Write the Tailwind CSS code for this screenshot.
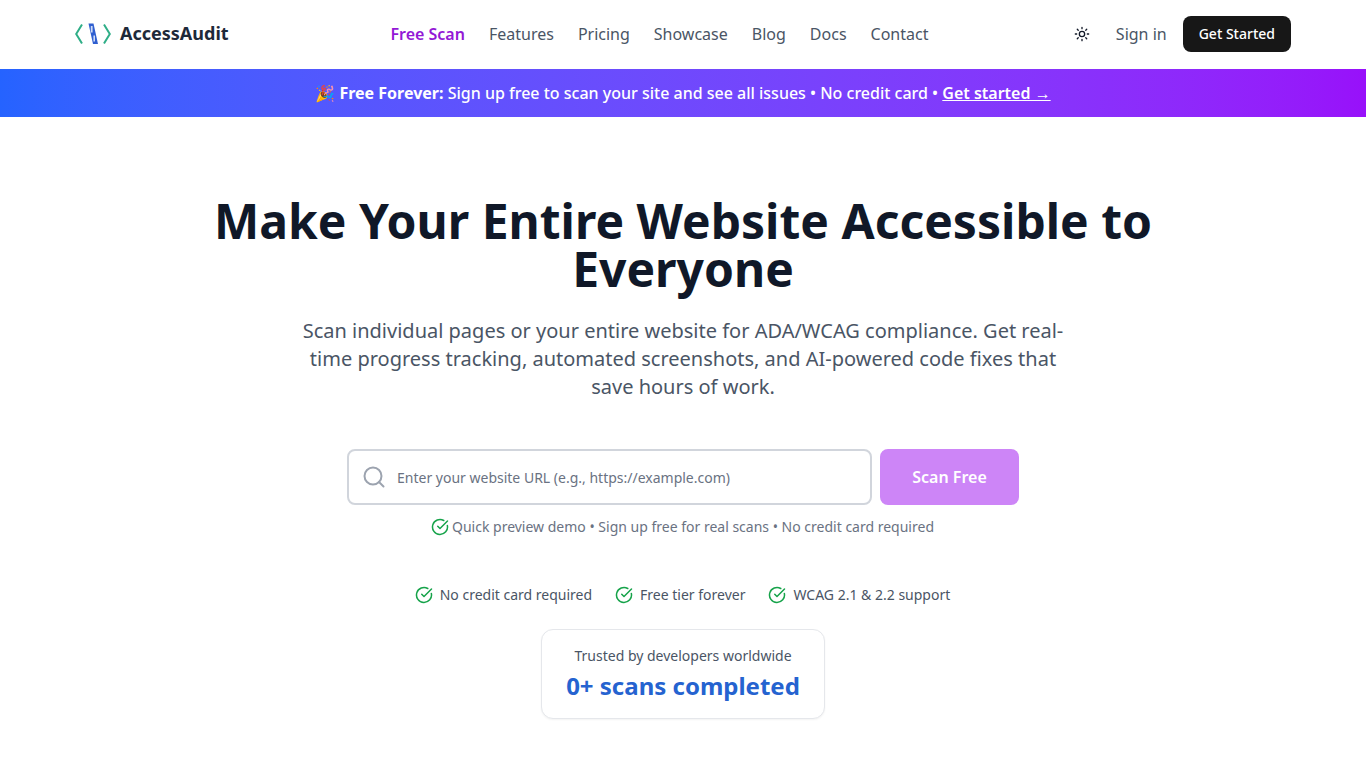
<!DOCTYPE html>
<html lang="en">
<head>
  <meta charset="UTF-8">
  <meta name="viewport" content="width=device-width, initial-scale=1.0">
  <title>AccessAudit</title>
  <script src="https://cdn.jsdelivr.net/npm/@tailwindcss/browser@4"></script>
</head>
<body class="bg-white min-h-screen font-['Noto_Sans','Noto_Color_Emoji',sans-serif] overflow-hidden">
  <!-- header -->
  <header class="h-[69px] bg-white">
    <div class="max-w-7xl mx-auto px-8 h-[68px] flex items-center justify-between">
      <a href="#" class="flex items-center gap-[9px] w-[170px]">
        <svg width="36" height="24" viewBox="0 0 36 24" fill="none">
          <path d="M7 2.5 L1.2 12 L7 21.5" stroke="#2fae87" stroke-width="2"/>
          <path d="M29 2.5 L34.8 12 L29 21.5" stroke="#2fae87" stroke-width="2"/>
          <path d="M13.5 1.5 H18.5 L23 22 H18 Z" fill="#2f5fd0"/>
          <path d="M15.8 4 H17.6 V10.5 H15.8 Z M18.4 13.5 H20 V19.5 H18.4 Z" fill="#cfdcf7"/>
        </svg>
        <span class="-mt-0.5 text-lg font-bold text-gray-800">AccessAudit</span>
      </a>
      <nav class="flex items-center gap-6 text-base text-gray-600">
        <a href="#" class="font-semibold text-[#9318d6]">Free Scan</a>
        <a href="#">Features</a>
        <a href="#">Pricing</a>
        <a href="#">Showcase</a>
        <a href="#">Blog</a>
        <a href="#">Docs</a>
        <a href="#">Contact</a>
      </nav>
      <div class="flex items-center">
        <svg class="mr-[26px]" width="16" height="16" viewBox="0 0 24 24" fill="none" stroke="#111827" stroke-width="2" stroke-linecap="round">
          <circle cx="12" cy="12" r="4"/>
          <path d="M12 2v2M12 20v2M4.93 4.93l1.41 1.41M17.66 17.66l1.41 1.41M2 12h2M20 12h2M6.34 17.66l-1.41 1.41M19.07 4.93l-1.41 1.41"/>
        </svg>
        <a href="#" class="text-base text-gray-600 mr-4">Sign in</a>
        <a href="#" class="h-9 px-4 flex items-center rounded-lg bg-[#171717] text-white text-sm font-medium">Get Started</a>
      </div>
    </div>
  </header>

  <!-- banner -->
  <div class="h-12 flex items-center justify-center bg-gradient-to-r from-[#2563ff] to-[#9810fa] text-white text-base font-medium">
    <p>🎉 <strong class="font-bold">Free Forever:</strong> Sign up free to scan your site and see all issues • No credit card • <a href="#" class="font-semibold underline">Get started →</a></p>
  </div>

  <!-- hero -->
  <main class="flex flex-col items-center pt-20 px-4">
    <h1 class="max-w-[1000px] text-center text-5xl leading-[48px] font-bold text-gray-900">Make Your Entire Website Accessible to Everyone</h1>
    <p class="mt-6 max-w-3xl text-center text-xl leading-7 text-gray-600">Scan individual pages or your entire website for ADA/WCAG compliance. Get real-time progress tracking, automated screenshots, and AI-powered code fixes that save hours of work.</p>

    <form class="mt-12 w-[672px] flex gap-2">
      <div class="relative flex-1">
        <svg class="absolute left-[15px] top-4" width="24" height="24" viewBox="0 0 24 24" fill="none" stroke="#9ca3af" stroke-width="2" stroke-linecap="round">
          <circle cx="11" cy="11" r="8.5"/>
          <path d="M21.5 21.5l-4.5-4.5"/>
        </svg>
        <input type="text" placeholder="Enter your website URL (e.g., https://example.com)" class="w-full h-14 pl-12 pr-4 rounded-lg border-2 border-gray-300 bg-white text-sm placeholder:text-gray-500">
      </div>
      <button type="button" class="w-[139px] h-14 rounded-lg bg-[#cd85f7] text-white font-semibold text-base">Scan Free</button>
    </form>

    <p class="mt-3 flex items-center gap-1 text-sm text-gray-500">
      <svg class="-m-px" width="18" height="18" viewBox="0 0 24 24" fill="none" stroke="#16a34a" stroke-width="2" stroke-linecap="round" stroke-linejoin="round"><path d="M21.8 10A10 10 0 1 1 17 3.34"/><path d="M9 11l3 3L22 4"/></svg>
      Quick preview demo • Sign up free for real scans • No credit card required
    </p>

    <ul class="mt-12 flex items-center gap-6 text-sm text-gray-600">
      <li class="flex items-center gap-2">
        <svg class="-m-px" width="18" height="18" viewBox="0 0 24 24" fill="none" stroke="#16a34a" stroke-width="2" stroke-linecap="round" stroke-linejoin="round"><path d="M21.8 10A10 10 0 1 1 17 3.34"/><path d="M9 11l3 3L22 4"/></svg>
        No credit card required
      </li>
      <li class="flex items-center gap-2">
        <svg class="-m-px" width="18" height="18" viewBox="0 0 24 24" fill="none" stroke="#16a34a" stroke-width="2" stroke-linecap="round" stroke-linejoin="round"><path d="M21.8 10A10 10 0 1 1 17 3.34"/><path d="M9 11l3 3L22 4"/></svg>
        Free tier forever
      </li>
      <li class="flex items-center gap-2">
        <svg class="-m-px" width="18" height="18" viewBox="0 0 24 24" fill="none" stroke="#16a34a" stroke-width="2" stroke-linecap="round" stroke-linejoin="round"><path d="M21.8 10A10 10 0 1 1 17 3.34"/><path d="M9 11l3 3L22 4"/></svg>
        WCAG 2.1 &amp; 2.2 support
      </li>
    </ul>

    <div class="mt-6 px-6 py-4 rounded-xl border border-gray-200 bg-white shadow-xs text-center">
      <p class="text-sm text-gray-600">Trusted by developers worldwide</p>
      <p class="mt-1 text-2xl font-bold text-[#2563d0]">0+ scans completed</p>
    </div>
  </main>
</body>
</html>
